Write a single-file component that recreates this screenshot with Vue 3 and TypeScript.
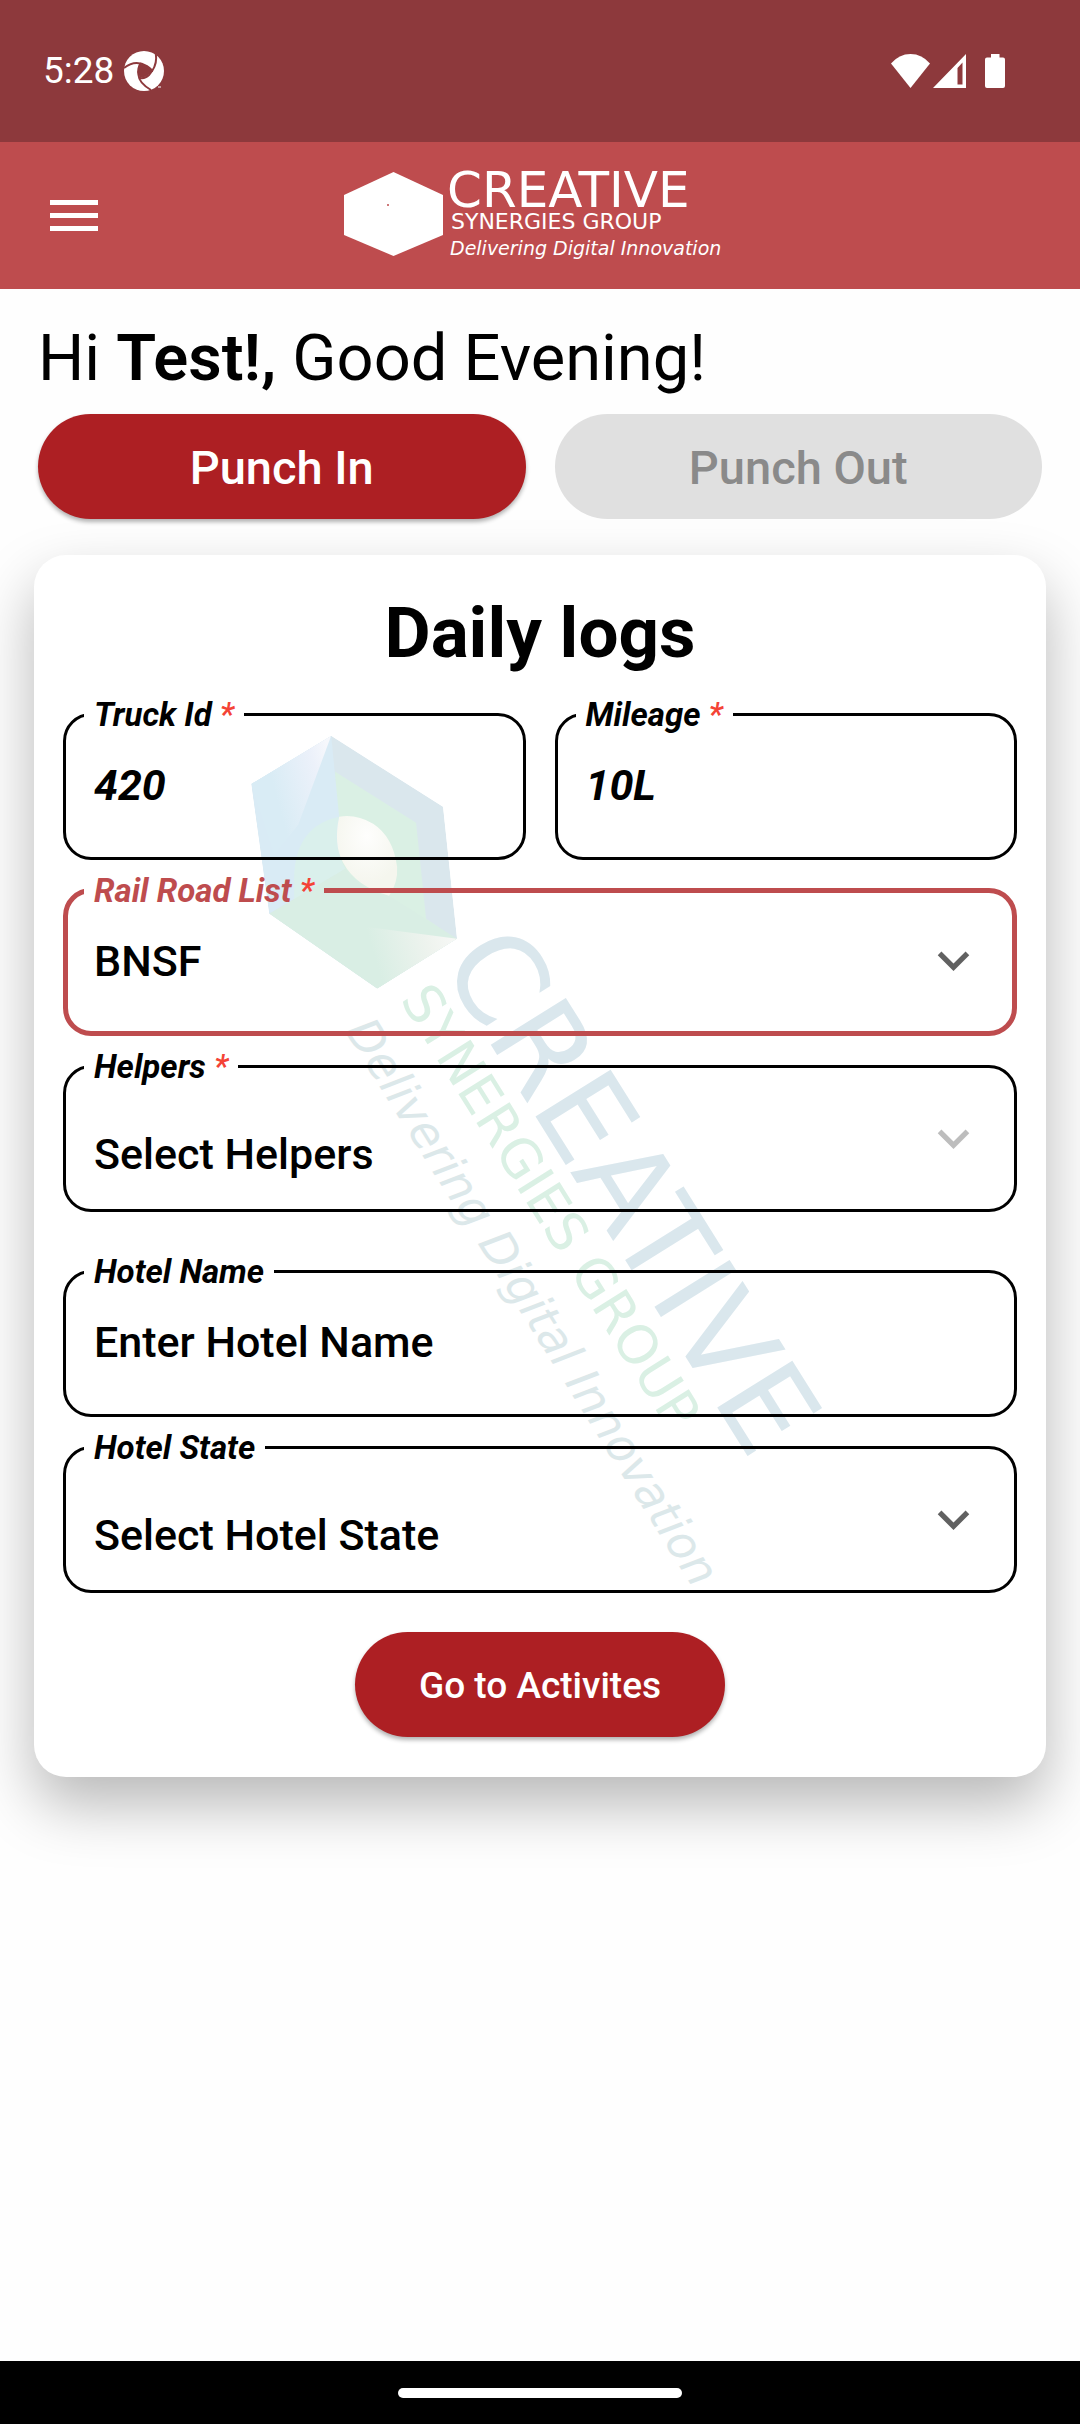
<script setup lang="ts">
import { ref } from 'vue'

interface BrandLine {
  text: string
  kind: string
  x: number
  y: number
}

const brandLines: BrandLine[] = [
  { text: 'CREATIVE', kind: 'name', x: 103, y: 35 },
  { text: 'SYNERGIES GROUP', kind: 'group', x: 107, y: 57 },
  { text: 'Delivering Digital Innovation', kind: 'tagline', x: 106, y: 83 },
]

const truckId = ref('420')
const mileage = ref('10L')
const railRoad = ref('BNSF')
const helpers = ref('')
const hotelName = ref('')
const hotelState = ref('')
</script>

<template>
  <div class="screen">
    <div class="status-bar">
      <div class="status-left">
        <span class="time">5:28</span>
        <svg class="notification" viewBox="0 0 40 40" aria-hidden="true">
          <circle cx="20" cy="20" r="20" fill="#fff" />
          <g fill="none" stroke="#8d393c" stroke-width="2">
            <path d="M0 17Q11 8 23 15Q28 18 28 21" />
            <path d="M31 0Q35 13 25 24Q21 28 16 27" />
            <path d="M27 39Q15 32 14.500 24Q13 17 17 12" />
          </g>
          <path d="M15 13Q23 12 28 20Q24 26 16 27Q13 20 15 13Z" fill="#8d393c" />
          <path d="M34 35l6-4v9h-7z" fill="#8d393c" />
          <path d="M34 36h3" stroke="#fff" stroke-width="1" />
        </svg>
      </div>
      <div class="status-right">
        <svg class="wifi" viewBox="0 0 39 34" aria-hidden="true">
          <path d="M0 9.500Q8 0 19.500 0T39 9.500L19.500 34Z" fill="#fff" />
        </svg>
        <svg class="signal" viewBox="0 0 33 34" aria-hidden="true">
          <path d="M33 0V34H0ZM29.500 8.500L24.500 14V30.500H29.500Z" fill="#fff" fill-rule="evenodd" />
        </svg>
        <svg class="battery" viewBox="0 0 20 34" aria-hidden="true">
          <path d="M6 0H14.500V3.500H18Q20 3.500 20 5.500V32Q20 34 18 34H2Q0 34 0 32V5.500Q0 3.500 2 3.500H6Z" fill="#fff" />
        </svg>
      </div>
    </div>

    <header class="app-bar">
      <button class="menu" type="button" aria-label="Open menu">
        <span></span><span></span><span></span>
      </button>
      <svg class="logo" viewBox="0 -16 392 120" role="img" aria-label="Creative Synergies Group">
        <path d="M49.500 0L99 23V63L49.500 84L0 63V23Z" fill="#fff" />
        <circle cx="44" cy="33" r="1" fill="#be4c4e" />
        <text v-for="line in brandLines" :key="line.kind" :class="['brand', line.kind]" :x="line.x" :y="line.y">{{ line.text }}</text>
      </svg>
    </header>

    <main class="content">
      <h1 class="greeting">Hi <strong>Test!,</strong> Good Evening!</h1>

      <div class="punch-row">
        <button class="pill" type="button">Punch In</button>
        <button class="pill" type="button" disabled>Punch Out</button>
      </div>

      <form class="card" @submit.prevent>
        <svg class="watermark" viewBox="0 0 1012 1223" preserveAspectRatio="xMidYMin meet" aria-hidden="true">
          <defs>
            <linearGradient id="blue-shine" x1="0" y1="0.600" x2="1" y2="0.200">
              <stop offset="0.300" stop-color="#d9ecf5" />
              <stop offset="0.800" stop-color="#ecf1fa" />
              <stop offset="1" stop-color="#f6f8fc" />
            </linearGradient>
            <linearGradient id="green-shine" x1="0" y1="0.500" x2="1" y2="0.300">
              <stop offset="0.100" stop-color="#d9eee4" />
              <stop offset="0.700" stop-color="#eef3ee" />
              <stop offset="1" stop-color="#f7f8f6" />
            </linearGradient>
            <radialGradient id="core" cx="0.500" cy="0.250" r="0.600">
              <stop offset="0" stop-color="#fefefd" />
              <stop offset="1" stop-color="#f5f6ee" />
            </radialGradient>
            <clipPath id="hexagon">
              <path d="M297 181L409 252L423 384L343 434L235 359L217 229Z" />
            </clipPath>
          </defs>
          <g clip-path="url(#hexagon)">
            <path d="M297 181L409 252L423 384L343 434L235 359L217 229Z" fill="#dae7ed" />
            <path d="M301 217L382 268L392 364L423 385L300 385Z" fill="#daf0e4" />
            <path d="M297 181L305 262Q300 300 311 314L235 359L217 229Z" fill="#d9ebf5" />
            <path d="M297 181L264 270L240 300L217 229Z" fill="url(#blue-shine)" />
            <path d="M305 262Q258 272 260 330V345L311 314Q298 290 305 262Z" fill="#daf0ec" />
            <path d="M235 359L311 314Q330 338 355 341L423 384L343 434Z" fill="#d9eee4" />
            <path d="M331 372L423 384L343 434Z" fill="url(#green-shine)" />
            <path d="M305 262Q322 259 339 269Q359 282 363 312Q364 328 355 341Q322 332 309 308Q299 290 305 262Z" fill="url(#core)" />
          </g>
          <g transform="translate(345 151) rotate(58) scale(2.430)">
            <text v-for="line in brandLines" :key="line.kind" :class="['brand', line.kind]" :x="line.x" :y="line.y">{{ line.text }}</text>
          </g>
        </svg>

        <h2 class="title">Daily logs</h2>

        <div class="fields">
          <div class="pair">
            <fieldset class="field">
              <legend><label for="truck">Truck Id <span class="required">*</span></label></legend>
              <input id="truck" v-model="truckId" class="control filled" type="text" />
            </fieldset>
            <fieldset class="field">
              <legend><label for="mileage">Mileage <span class="required">*</span></label></legend>
              <input id="mileage" v-model="mileage" class="control filled" type="text" />
            </fieldset>
          </div>

          <fieldset class="field active">
            <legend><label for="railroad">Rail Road List <span class="required">*</span></label></legend>
            <select id="railroad" v-model="railRoad" class="control">
              <option>BNSF</option>
            </select>
            <svg class="chevron" viewBox="0 0 24 24" aria-hidden="true"><path d="M7.410 8.590L12 13.170l4.590-4.580L18 10l-6 6-6-6z" /></svg>
          </fieldset>

          <fieldset class="field">
            <legend><label for="helpers">Helpers <span class="required">*</span></label></legend>
            <select id="helpers" v-model="helpers" class="control hint" disabled>
              <option value="">Select Helpers</option>
            </select>
            <svg class="chevron muted" viewBox="0 0 24 24" aria-hidden="true"><path d="M7.410 8.590L12 13.170l4.590-4.580L18 10l-6 6-6-6z" /></svg>
          </fieldset>

          <fieldset class="field spaced">
            <legend><label for="hotel">Hotel Name</label></legend>
            <input id="hotel" v-model="hotelName" class="control" type="text" placeholder="Enter Hotel Name" />
          </fieldset>

          <fieldset class="field">
            <legend><label for="state">Hotel State</label></legend>
            <select id="state" v-model="hotelState" class="control hint">
              <option value="">Select Hotel State</option>
            </select>
            <svg class="chevron" viewBox="0 0 24 24" aria-hidden="true"><path d="M7.410 8.590L12 13.170l4.590-4.580L18 10l-6 6-6-6z" /></svg>
          </fieldset>
        </div>

        <button class="pill submit" type="submit">Go to Activites</button>
      </form>
    </main>

    <div class="nav-bar"><span class="handle"></span></div>
  </div>
</template>

<style>
body {
  background: #fefefe;
}
</style>

<style scoped>
.screen {
  display: flex;
  flex-direction: column;
  min-height: 100vh;
  font-family: Roboto, 'Noto Sans', sans-serif;
  color: #000;
}

.status-bar {
  display: flex;
  justify-content: space-between;
  align-items: center;
  height: 142px;
  padding: 0 75px 0 43px;
  box-sizing: border-box;
  background: #8d393c;
  color: #fff;
}

.status-left,
.status-right {
  display: flex;
  align-items: center;
}

.status-left {
  gap: 10px;
}

.time {
  font-size: 37px;
  line-height: 44px;
}

.notification {
  width: 40px;
  height: 40px;
}

.wifi {
  width: 39px;
  height: 34px;
}

.signal {
  width: 33px;
  height: 34px;
  margin: 0 19px 0 3px;
}

.battery {
  width: 20px;
  height: 34px;
}

.app-bar {
  display: grid;
  grid-template-columns: 1fr auto 1fr;
  align-items: center;
  height: 147px;
  padding: 0 50px;
  box-sizing: border-box;
  background: #be4c4e;
}

.menu {
  display: flex;
  flex-direction: column;
  justify-self: start;
  gap: 8px;
  width: 48px;
  padding: 0;
  border: 0;
  background: none;
}

.menu span {
  height: 5px;
  background: #fff;
}

.logo {
  width: 392px;
  height: 120px;
}

.brand {
  font-family: 'DejaVu Sans', Verdana, sans-serif;
  fill: #fff;
}

.name {
  font-size: 50px;
}

.group {
  font-size: 22px;
}

.tagline {
  font-size: 19px;
  font-style: italic;
}

.watermark .name {
  fill: #dae7ed;
}

.watermark .group {
  fill: #daf0e4;
}

.watermark .tagline {
  fill: #dce8ea;
}

.content {
  padding: 30px 34px 80px;
}

.greeting {
  margin: 0 4px;
  font-size: 65px;
  line-height: 78px;
  font-weight: 400;
}

.greeting strong {
  font-weight: 600;
}

.punch-row {
  display: grid;
  grid-template-columns: 1fr 1fr;
  gap: 29px;
  margin: 17px 4px 36px;
}

.pill {
  height: 105px;
  padding: 2px 0 0;
  border: 0;
  border-radius: 53px;
  background: #ad1f23;
  color: #fff;
  font: 500 47px/56px Roboto, 'Noto Sans', sans-serif;
  box-shadow: 0 3px 4px rgba(0, 0, 0, 0.3);
}

.pill:disabled {
  background: #e0e0e0;
  color: #8a8a8a;
  box-shadow: none;
}

.card {
  position: relative;
  display: flex;
  flex-direction: column;
  padding: 36px 29px 40px;
  border-radius: 32px;
  background: #fff;
  box-shadow: 0 28px 60px rgba(0, 0, 0, 0.28);
}

.watermark {
  position: absolute;
  inset: 0;
  width: 100%;
  height: 100%;
}

.title {
  position: relative;
  margin: 0 0 22px;
  font-size: 71px;
  line-height: 84px;
  font-weight: 700;
  text-align: center;
}

.fields {
  position: relative;
  display: flex;
  flex-direction: column;
  gap: 13px;
}

.pair {
  display: grid;
  grid-template-columns: 1fr 1fr;
  gap: 29px;
}

.field {
  position: relative;
  min-width: 0;
  height: 163px;
  margin: 0;
  padding: 0 28px;
  box-sizing: border-box;
  border: 3px solid #000;
  border-radius: 28px;
}

.field.spaced {
  margin-top: 29px;
}

.field.active {
  padding: 0 26px;
  border: 5px solid #be4c4e;
}

legend {
  height: 35px;
  margin-left: -10px;
  padding: 0 10px;
  font-size: 33px;
  line-height: 35px;
  font-style: italic;
  font-weight: 700;
}

.active legend {
  color: #be4c4e;
}

.required {
  color: #f44336;
  font-weight: 500;
}

.control {
  display: block;
  width: 100%;
  height: 105px;
  margin: 0;
  padding: 0;
  border: 0;
  outline: 0;
  border-radius: 0;
  appearance: none;
  background: none;
  color: #000;
  opacity: 1;
  font: 500 43px/50px Roboto, 'Noto Sans', sans-serif;
}

.control::placeholder {
  color: #000;
  opacity: 1;
}

.filled {
  font-style: italic;
  font-weight: 700;
}

.hint {
  height: 125px;
  padding-top: 14px;
}

.chevron {
  position: absolute;
  right: 29px;
  top: 23px;
  width: 63px;
  height: 63px;
  fill: #616161;
  pointer-events: none;
}

.active .chevron {
  right: 27px;
  top: 21px;
}

.chevron.muted {
  fill: #bdbdbd;
}

.submit {
  position: relative;
  align-self: center;
  margin-top: 39px;
  padding: 2px 64px 0;
  font-size: 37px;
}

.nav-bar {
  display: flex;
  justify-content: center;
  align-items: center;
  height: 63px;
  margin-top: auto;
  background: #000;
}

.handle {
  width: 284px;
  height: 10px;
  border-radius: 5px;
  background: #fff;
}
</style>
